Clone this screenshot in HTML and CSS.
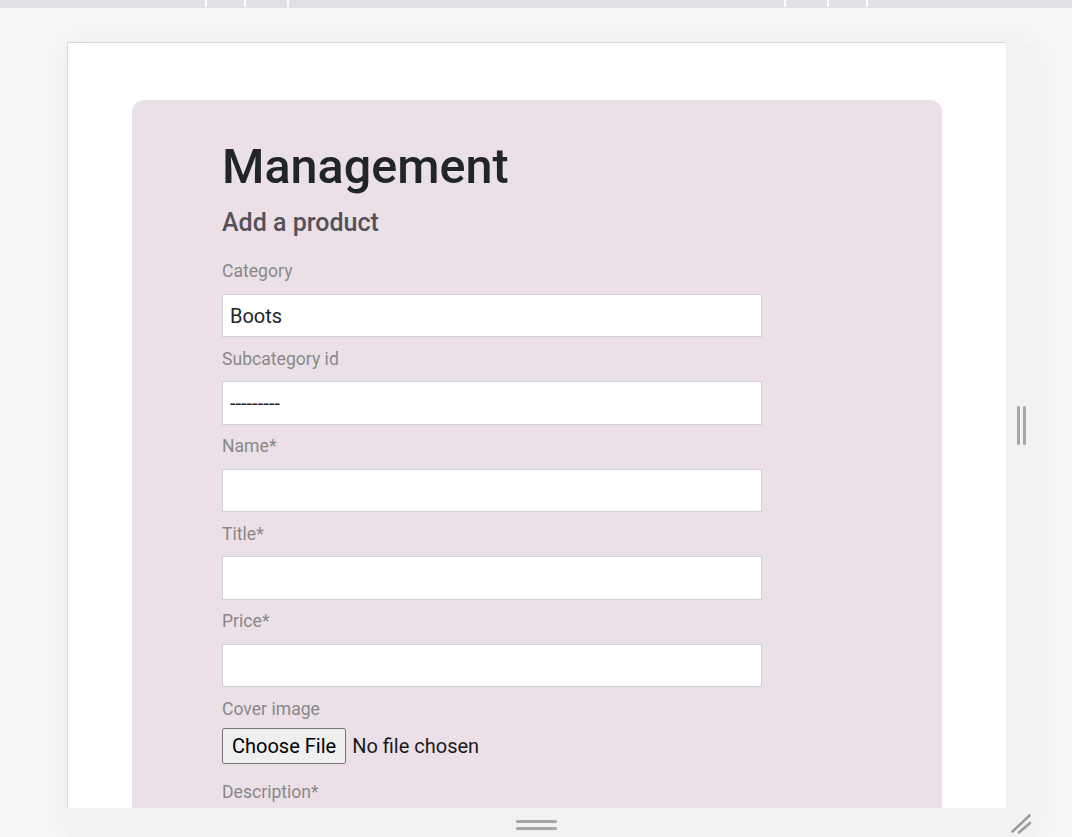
FILE: index.html
```html
<!DOCTYPE html>
<html lang="en">
<head>
<meta charset="utf-8">
<title>Management</title>
<link rel="stylesheet" href="styles.css">
</head>
<body>
<div class="ruler">
  <span class="tick t1"></span><span class="tick t2"></span><span class="tick t3"></span>
  <span class="tick t4"></span><span class="tick t5"></span><span class="tick t6"></span>
</div>
<main class="stage">
  <div class="resizer">
    <div class="frame">
      <div class="card">
        <h1 class="title">Management</h1>
        <h2 class="subtitle">Add a product</h2>
        <form class="form">
          <label class="field-label" for="category">Category</label>
          <input class="input" id="category" type="text" value="Boots">
          <label class="field-label" for="subcat">Subcategory id</label>
          <select class="input" id="subcat"><option>---------</option></select>
          <label class="field-label" for="name">Name*</label>
          <input class="input" id="name" type="text">
          <label class="field-label" for="ptitle">Title*</label>
          <input class="input" id="ptitle" type="text">
          <label class="field-label" for="price">Price*</label>
          <input class="input" id="price" type="text">
          <label class="field-label file-label" for="cover">Cover image</label>
          <input class="file" id="cover" type="file">
          <label class="field-label" for="desc">Description*</label>
          <textarea class="input textarea" id="desc"></textarea>
        </form>
      </div>
    </div>
    <div class="handle-right"><span class="vbar"></span><span class="vbar"></span></div>
    <div class="handle-bottom"><span class="hbar"></span><span class="hbar"></span></div>
    <div class="handle-corner">
      <svg width="30" height="30" viewBox="0 0 30 30">
        <line x1="6.5" y1="23.5" x2="23.5" y2="7.5" stroke="#9c9c9c" stroke-width="2.6" stroke-linecap="round"/>
        <line x1="13" y1="24.5" x2="24" y2="15" stroke="#9c9c9c" stroke-width="2.6" stroke-linecap="round"/>
      </svg>
    </div>
  </div>
</main>
</body>
</html>
```
FILE: styles.css
```css
html, body {
  margin: 0;
  height: 837px;
  overflow: hidden;
}
body {
  background: #f6f7f7;
  font-family: Roboto, "Liberation Sans", sans-serif;
}
.ruler {
  height: 8px;
  background: #dfe1e5;
  display: flex;
}
.tick {
  width: 2px;
  height: 7px;
  background: #ffffff;
}
.t1 { margin-left: 205px; }
.t2 { margin-left: 37px; }
.t3 { margin-left: 41px; }
.t4 { margin-left: 495px; }
.t5 { margin-left: 41px; }
.t6 { margin-left: 37px; }

.stage {
  padding: 34px 0 0 67px;
}
.resizer {
  display: grid;
  grid-template-columns: 939px 30px;
  grid-template-rows: 766px 30px;
  width: 969px;
  box-shadow: 0 0 32px rgba(0, 0, 0, 0.05);
}
.frame {
  box-sizing: border-box;
  border-top: 1px solid #d9d9d9;
  border-left: 1px solid #d9d9d9;
  background: #ffffff;
  overflow: hidden;
}
.handle-right {
  background: #f1f2f4;
  margin-top: 1px;
  display: flex;
  align-items: center;
  justify-content: center;
  gap: 3px;
}
.vbar {
  width: 3px;
  height: 39px;
  background: #a5a5a5;
  border-radius: 1.5px;
}
.handle-bottom {
  background: #f1f2f4;
  display: flex;
  flex-direction: column;
  align-items: center;
  padding-top: 12px;
  gap: 4px;
}
.hbar {
  width: 41px;
  height: 3px;
  background: #a5a5a5;
  border-radius: 1.5px;
}
.handle-corner {
  background: #f1f2f4;
}
.handle-corner svg {
  display: block;
}

.card {
  margin: 57px 64px 0;
  background: #ece0e8;
  border-radius: 12px;
  padding: 38px 90px 40px;
}
.title {
  margin: 0;
  font-size: 48.5px;
  font-weight: 500;
  line-height: 1.2;
  color: #212529;
}
.subtitle {
  margin: 12px 0 0;
  font-size: 25px;
  font-weight: 500;
  line-height: 30px;
  color: #525258;
}
.form {
  width: 540px;
  margin-top: 20px;
}
.field-label {
  display: block;
  font-size: 17.6px;
  line-height: 26px;
  color: #888888;
  margin: 8.5px 0 9.5px;
}
.file-label {
  margin-bottom: 6px;
}
.input {
  display: block;
  width: 100%;
  box-sizing: border-box;
  height: 43.5px;
  margin: 0;
  border: 1px solid #ced1d8;
  border-radius: 0;
  background: #ffffff;
  padding: 1px 7px 0;
  font-family: Roboto, "Liberation Sans", sans-serif;
  font-size: 20px;
  color: #212529;
  appearance: none;
  -webkit-appearance: none;
  outline: none;
}
.textarea {
  height: 120px;
  resize: none;
}
.file {
  display: block;
  margin: 0 0 15px;
  font-family: Roboto, "Liberation Sans", sans-serif;
  font-size: 20px;
  color: #1a1a1a;
}
.file::file-selector-button {
  font-family: Roboto, "Liberation Sans", sans-serif;
  font-size: 20px;
  line-height: normal;
  padding: 5px 9px;
  margin: 0 6px 0 0;
  border: 1px solid #767676;
  border-radius: 2px;
  background: #efefef;
  color: #000000;
}
```
